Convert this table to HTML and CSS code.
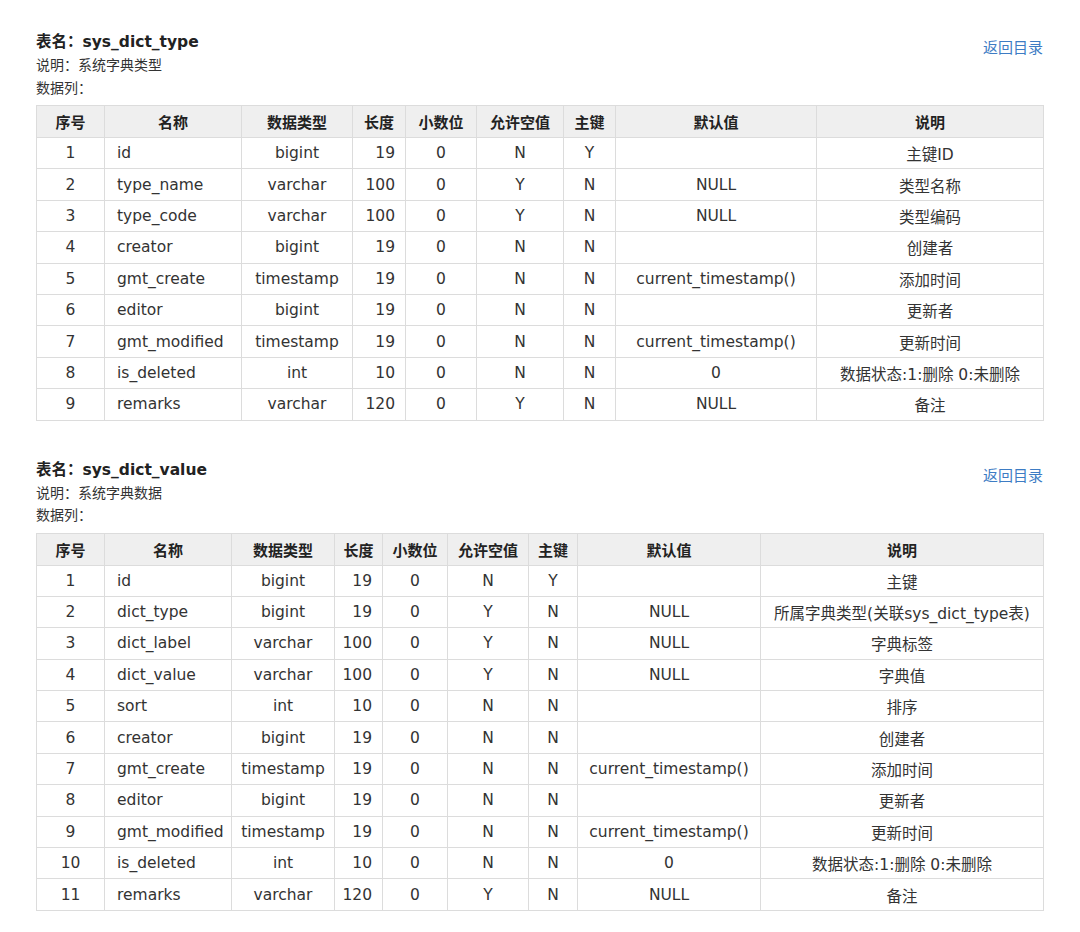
FILE: index.html
```html
<!DOCTYPE html>
<html lang="zh">
<head>
<meta charset="utf-8">
<title>数据字典</title>
<link rel="stylesheet" href="styles.css">
</head>
<body>
<div class="page">
  <section class="tbl-section">
    <div class="tbl-head">
      <div class="tbl-meta">
        <div class="tbl-title">表名：sys_dict_type</div>
        <div class="tbl-line">说明：系统字典类型</div>
        <div class="tbl-line">数据列：</div>
      </div>
      <a class="back-link" href="#">返回目录</a>
    </div>
    <table class="dict dict-a">
      <colgroup><col><col><col><col><col><col><col><col><col></colgroup>
      <thead>
        <tr><th>序号</th><th>名称</th><th>数据类型</th><th>长度</th><th>小数位</th><th>允许空值</th><th>主键</th><th>默认值</th><th>说明</th></tr>
      </thead>
      <tbody>
        <tr><td>1</td><td class="name">id</td><td>bigint</td><td class="len">19</td><td>0</td><td>N</td><td>Y</td><td></td><td>主键ID</td></tr>
        <tr><td>2</td><td class="name">type_name</td><td>varchar</td><td class="len">100</td><td>0</td><td>Y</td><td>N</td><td>NULL</td><td>类型名称</td></tr>
        <tr><td>3</td><td class="name">type_code</td><td>varchar</td><td class="len">100</td><td>0</td><td>Y</td><td>N</td><td>NULL</td><td>类型编码</td></tr>
        <tr><td>4</td><td class="name">creator</td><td>bigint</td><td class="len">19</td><td>0</td><td>N</td><td>N</td><td></td><td>创建者</td></tr>
        <tr><td>5</td><td class="name">gmt_create</td><td>timestamp</td><td class="len">19</td><td>0</td><td>N</td><td>N</td><td>current_timestamp()</td><td>添加时间</td></tr>
        <tr><td>6</td><td class="name">editor</td><td>bigint</td><td class="len">19</td><td>0</td><td>N</td><td>N</td><td></td><td>更新者</td></tr>
        <tr><td>7</td><td class="name">gmt_modified</td><td>timestamp</td><td class="len">19</td><td>0</td><td>N</td><td>N</td><td>current_timestamp()</td><td>更新时间</td></tr>
        <tr><td>8</td><td class="name">is_deleted</td><td>int</td><td class="len">10</td><td>0</td><td>N</td><td>N</td><td>0</td><td>数据状态:1:删除 0:未删除</td></tr>
        <tr><td>9</td><td class="name">remarks</td><td>varchar</td><td class="len">120</td><td>0</td><td>Y</td><td>N</td><td>NULL</td><td>备注</td></tr>
      </tbody>
    </table>
  </section>

  <section class="tbl-section">
    <div class="tbl-head">
      <div class="tbl-meta">
        <div class="tbl-title">表名：sys_dict_value</div>
        <div class="tbl-line">说明：系统字典数据</div>
        <div class="tbl-line">数据列：</div>
      </div>
      <a class="back-link" href="#">返回目录</a>
    </div>
    <table class="dict dict-b">
      <colgroup><col><col><col><col><col><col><col><col><col></colgroup>
      <thead>
        <tr><th>序号</th><th>名称</th><th>数据类型</th><th>长度</th><th>小数位</th><th>允许空值</th><th>主键</th><th>默认值</th><th>说明</th></tr>
      </thead>
      <tbody>
        <tr><td>1</td><td class="name">id</td><td>bigint</td><td class="len">19</td><td>0</td><td>N</td><td>Y</td><td></td><td>主键</td></tr>
        <tr><td>2</td><td class="name">dict_type</td><td>bigint</td><td class="len">19</td><td>0</td><td>Y</td><td>N</td><td>NULL</td><td>所属字典类型(关联sys_dict_type表)</td></tr>
        <tr><td>3</td><td class="name">dict_label</td><td>varchar</td><td class="len">100</td><td>0</td><td>Y</td><td>N</td><td>NULL</td><td>字典标签</td></tr>
        <tr><td>4</td><td class="name">dict_value</td><td>varchar</td><td class="len">100</td><td>0</td><td>Y</td><td>N</td><td>NULL</td><td>字典值</td></tr>
        <tr><td>5</td><td class="name">sort</td><td>int</td><td class="len">10</td><td>0</td><td>N</td><td>N</td><td></td><td>排序</td></tr>
        <tr><td>6</td><td class="name">creator</td><td>bigint</td><td class="len">19</td><td>0</td><td>N</td><td>N</td><td></td><td>创建者</td></tr>
        <tr><td>7</td><td class="name">gmt_create</td><td>timestamp</td><td class="len">19</td><td>0</td><td>N</td><td>N</td><td>current_timestamp()</td><td>添加时间</td></tr>
        <tr><td>8</td><td class="name">editor</td><td>bigint</td><td class="len">19</td><td>0</td><td>N</td><td>N</td><td></td><td>更新者</td></tr>
        <tr><td>9</td><td class="name">gmt_modified</td><td>timestamp</td><td class="len">19</td><td>0</td><td>N</td><td>N</td><td>current_timestamp()</td><td>更新时间</td></tr>
        <tr><td>10</td><td class="name">is_deleted</td><td>int</td><td class="len">10</td><td>0</td><td>N</td><td>N</td><td>0</td><td>数据状态:1:删除 0:未删除</td></tr>
        <tr><td>11</td><td class="name">remarks</td><td>varchar</td><td class="len">120</td><td>0</td><td>Y</td><td>N</td><td>NULL</td><td>备注</td></tr>
      </tbody>
    </table>
  </section>
</div>
</body>
</html>
```

FILE: styles.css
```css
html, body {
  margin: 0;
  padding: 0;
  background: #ffffff;
}

body {
  font-family: "DejaVu Sans", "Noto Sans CJK SC", sans-serif;
  color: #333333;
  font-size: 15px;
}

.page {
  padding: 31px 37px 20px 36px;
  display: flex;
  flex-direction: column;
  gap: 38px;
}

.tbl-head {
  display: flex;
  justify-content: space-between;
  align-items: flex-start;
}

.tbl-meta {
  display: flex;
  flex-direction: column;
}

.tbl-title {
  font-size: 15.5px;
  font-weight: bold;
  line-height: 23px;
  color: #222222;
}

.tbl-line {
  font-size: 14px;
  line-height: 22.5px;
  color: #333333;
}

.back-link {
  font-size: 15px;
  line-height: 22px;
  margin-top: 6px;
  color: #3d7cc4;
  text-decoration: none;
}

.dict {
  margin-top: 6px;
  width: 1007px;
  table-layout: fixed;
  border-collapse: collapse;
  font-size: 15.5px;
}

.dict th,
.dict td {
  border: 1px solid #dcdcdc;
  text-align: center;
  padding: 0 6px;
  white-space: nowrap;
  overflow: hidden;
}

.dict th {
  height: 31px;
  background: #efefef;
  font-weight: bold;
  font-size: 15px;
  color: #222222;
}

.dict td {
  height: 30.4px;
}

.dict td.name {
  text-align: left;
  padding-left: 12px;
}

.dict td.len {
  text-align: right;
  padding-right: 10px;
}

.dict-a col:nth-child(1) { width: 68px; }
.dict-a col:nth-child(2) { width: 137px; }
.dict-a col:nth-child(3) { width: 111px; }
.dict-a col:nth-child(4) { width: 53px; }
.dict-a col:nth-child(5) { width: 71px; }
.dict-a col:nth-child(6) { width: 87px; }
.dict-a col:nth-child(7) { width: 52px; }
.dict-a col:nth-child(8) { width: 201px; }
.dict-a col:nth-child(9) { width: 227px; }

.dict-b col:nth-child(1) { width: 68px; }
.dict-b col:nth-child(2) { width: 127px; }
.dict-b col:nth-child(3) { width: 103px; }
.dict-b col:nth-child(4) { width: 48px; }
.dict-b col:nth-child(5) { width: 65px; }
.dict-b col:nth-child(6) { width: 81px; }
.dict-b col:nth-child(7) { width: 49px; }
.dict-b col:nth-child(8) { width: 183px; }
.dict-b col:nth-child(9) { width: 283px; }
```
